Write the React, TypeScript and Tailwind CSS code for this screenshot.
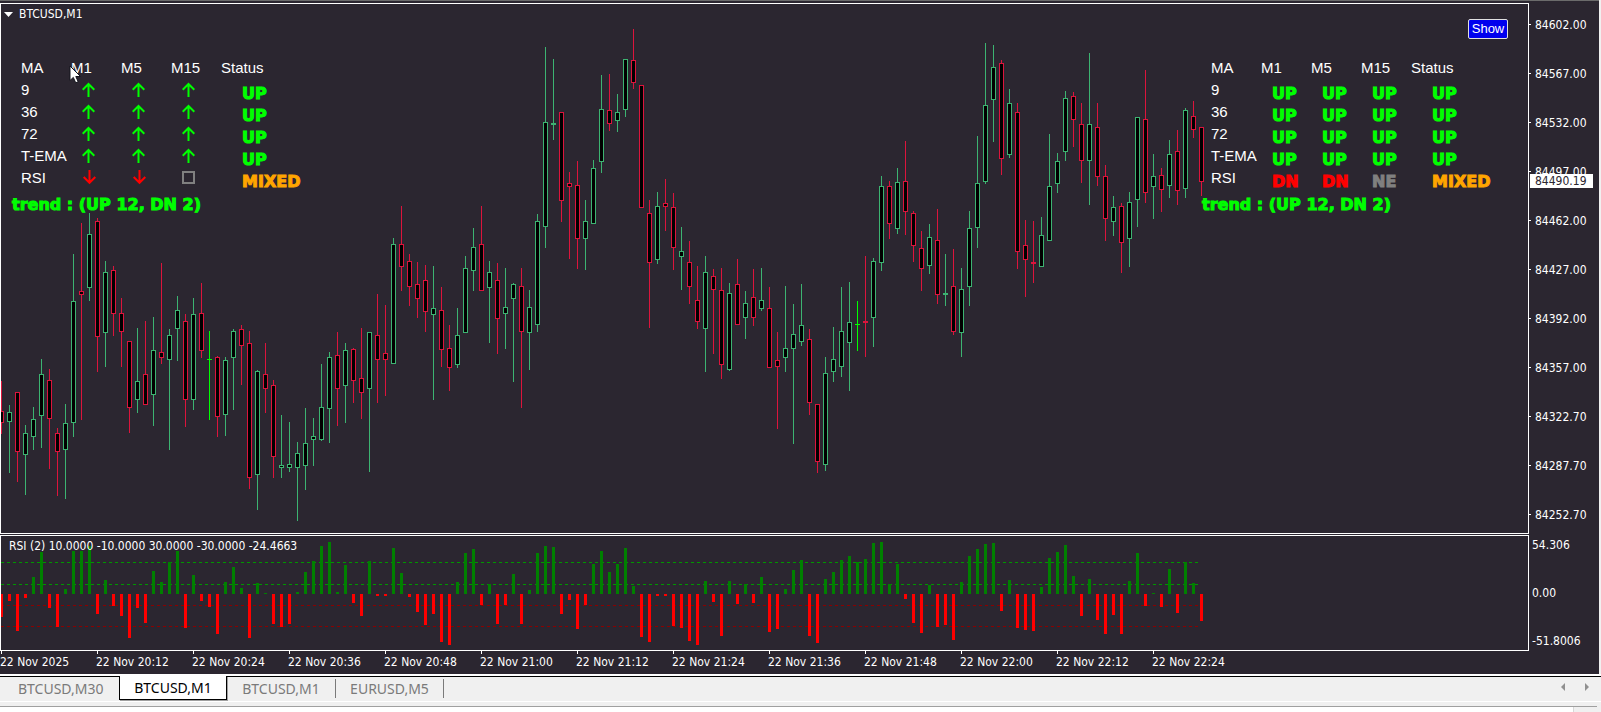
type Candle = [dir: 'u' | 'd' | 'x', high: number, top: number, bottom: number, low: number];

const STEP = 8;

const candles: Candle[] = [
  ['d', 381, 411, 423, 434], ['u', 405, 412, 422, 473], ['d', 392, 392, 452, 482], ['u', 425, 433, 455, 495],
  ['u', 407, 419, 437, 450], ['u', 359, 374, 416, 448], ['d', 369, 380, 419, 469], ['d', 428, 433, 452, 496],
  ['u', 404, 423, 450, 499], ['u', 254, 301, 423, 437], ['d', 223, 291, 295, 420], ['u', 213, 234, 288, 301],
  ['d', 218, 221, 337, 372], ['u', 261, 272, 333, 367], ['d', 266, 270, 314, 336], ['d', 298, 313, 332, 367],
  ['d', 341, 341, 408, 433], ['u', 328, 381, 400, 413], ['d', 321, 374, 405, 405], ['u', 317, 350, 395, 426],
  ['d', 263, 352, 358, 364], ['u', 329, 335, 360, 450], ['u', 296, 310, 329, 361], ['d', 314, 321, 400, 427],
  ['u', 298, 314, 400, 410], ['d', 283, 313, 351, 358], ['x', 331, 359, 360, 420], ['d', 356, 357, 417, 437],
  ['u', 357, 360, 415, 436], ['u', 329, 331, 358, 410], ['d', 325, 329, 346, 385], ['d', 331, 343, 478, 489],
  ['u', 370, 371, 475, 510], ['d', 343, 374, 389, 413], ['d', 380, 385, 457, 478], ['u', 415, 465, 468, 478],
  ['u', 422, 464, 468, 472], ['u', 442, 453, 468, 521], ['u', 408, 443, 466, 490], ['u', 418, 436, 440, 466],
  ['u', 364, 407, 440, 441], ['u', 352, 357, 409, 443], ['d', 332, 355, 389, 426], ['u', 343, 350, 386, 423],
  ['d', 348, 349, 381, 403], ['d', 328, 378, 393, 419], ['u', 332, 332, 389, 472], ['d', 294, 335, 360, 403],
  ['d', 305, 353, 360, 396], ['u', 238, 244, 364, 364], ['d', 206, 244, 267, 291], ['d', 254, 261, 287, 306],
  ['d', 262, 284, 299, 318], ['d', 265, 280, 312, 332], ['u', 266, 308, 315, 400], ['d', 287, 310, 350, 367],
  ['d', 325, 348, 368, 391], ['u', 308, 335, 365, 368], ['u', 256, 268, 333, 333], ['u', 228, 247, 271, 291],
  ['d', 206, 244, 291, 291], ['u', 261, 272, 288, 343], ['d', 263, 280, 319, 354], ['u', 268, 307, 314, 349],
  ['u', 283, 284, 299, 382], ['d', 268, 286, 332, 408], ['u', 290, 307, 333, 370], ['u', 214, 221, 325, 332],
  ['u', 47, 122, 227, 248], ['u', 59, 123, 125, 140], ['d', 112, 112, 201, 222], ['d', 172, 183, 187, 259],
  ['d', 161, 185, 239, 269], ['u', 200, 221, 239, 270], ['u', 160, 168, 224, 224], ['u', 75, 109, 162, 173],
  ['d', 74, 110, 124, 131], ['u', 94, 112, 121, 132], ['u', 59, 59, 110, 117], ['d', 29, 60, 83, 89],
  ['d', 85, 85, 208, 208], ['d', 200, 213, 263, 328], ['u', 192, 206, 260, 264], ['d', 179, 203, 207, 231],
  ['d', 193, 207, 248, 270], ['u', 227, 251, 257, 290], ['d', 241, 262, 287, 304], ['d', 266, 300, 322, 329],
  ['u', 256, 272, 329, 372], ['d', 269, 276, 290, 354], ['d', 268, 290, 365, 379], ['u', 283, 293, 370, 371],
  ['d', 259, 284, 325, 325], ['u', 291, 303, 318, 339], ['d', 269, 297, 318, 326], ['u', 268, 300, 309, 311],
  ['d', 287, 308, 368, 368], ['d', 332, 360, 367, 429], ['u', 286, 348, 358, 372], ['u', 304, 334, 349, 444],
  ['u', 284, 325, 342, 346], ['d', 329, 339, 403, 415], ['d', 404, 404, 462, 473], ['u', 357, 373, 465, 471],
  ['u', 327, 359, 372, 382], ['u', 287, 331, 367, 377], ['u', 282, 322, 343, 391], ['x', 301, 324, 325, 351],
  ['d', 256, 321, 323, 357], ['u', 258, 261, 318, 347], ['u', 176, 186, 263, 271], ['d', 181, 186, 224, 239],
  ['u', 168, 182, 229, 234], ['d', 141, 181, 212, 235], ['d', 211, 213, 246, 262], ['d', 231, 248, 269, 291],
  ['u', 224, 237, 266, 274], ['d', 209, 240, 295, 304], ['u', 254, 293, 295, 306], ['d', 249, 286, 332, 335],
  ['u', 268, 289, 333, 357], ['u', 211, 228, 287, 306], ['u', 136, 183, 228, 248], ['u', 43, 105, 182, 184],
  ['u', 45, 67, 100, 142], ['d', 60, 63, 159, 175], ['u', 89, 103, 155, 158], ['d', 103, 112, 252, 269],
  ['d', 220, 245, 260, 297], ['d', 221, 262, 264, 283], ['u', 217, 235, 267, 267], ['u', 134, 186, 241, 241],
  ['u', 153, 161, 184, 193], ['u', 91, 98, 152, 161], ['d', 92, 96, 120, 147], ['d', 103, 124, 161, 183],
  ['u', 53, 124, 161, 205], ['d', 103, 127, 177, 186], ['d', 165, 176, 219, 241], ['u', 196, 207, 222, 236],
  ['d', 203, 206, 243, 273], ['u', 192, 202, 239, 267], ['u', 117, 117, 200, 227], ['d', 70, 119, 193, 203],
  ['u', 154, 176, 187, 219], ['d', 168, 175, 190, 212], ['u', 140, 154, 186, 198], ['d', 130, 151, 191, 205],
  ['u', 108, 110, 189, 198], ['d', 101, 116, 130, 138], ['d', 127, 127, 182, 196],
];

const rsi = [
  -23, -7, -37, -4, 17, 42, -14, -33, 5, 43, 43, 48, -20, 14, -12, -22, -44, -14, -29, 23, 12, 32, 43, -34, 19,
  -7, -13, -40, 12, 27, 6, -44, 11, 1, -30, -33, -30, 2, 22, 33, 48, 52, 2, 29, -9, -22, 33, -2, -2, 46,
  21, -3, -18, -31, -20, -48, -51, 12, 41, 45, -11, 10, -30, -11, 20, -30, 4, 41, 48, 47, -20, -6, -35, -11, 30,
  43, 22, 30, 46, 8, -43, -48, -2, -2, -32, -34, -47, -51, 13, -8, -42, 13, -10, 10, -9, 17, -38, -35, 5, 24,
  34, -42, -49, 15, 22, 34, 38, 32, 35, 51, 52, 10, 30, -5, -29, -39, 9, -33, -31, -46, 12, 38, 45, 50, 51,
  -17, 14, -34, -36, -37, 7, 36, 42, 49, 18, -22, 15, -26, -40, -21, -40, 13, 41, -12, 1, -13, 25, -19, 32, 11, -27,
];

const prices = [
  '84602.00', '84567.00', '84532.00', '84497.00', '84462.00', '84427.00',
  '84392.00', '84357.00', '84322.70', '84287.70', '84252.70',
];

const times = [
  '2025', '20:12', '20:24', '20:36', '20:48', '21:00', '21:12',
  '21:24', '21:36', '21:48', '22:00', '22:12', '22:24',
];

const candleColor = { u: '#3cb371', d: '#dc143c', x: '#00ff00' };

const signalColor: Record<string, string> = {
  UP: 'text-[#00ff00]',
  DN: 'text-[#ff0000]',
  NE: 'text-[#808080]',
  MIXED: 'text-[#ffa500]',
};

const heavyText = "text-base font-bold font-['DejaVu_Sans',sans-serif] [-webkit-text-stroke:1px_currentColor]";

const rows = [
  { ma: '9', signals: ['UP', 'UP', 'UP'], status: 'UP' },
  { ma: '36', signals: ['UP', 'UP', 'UP'], status: 'UP' },
  { ma: '72', signals: ['UP', 'UP', 'UP'], status: 'UP' },
  { ma: 'T-EMA', signals: ['UP', 'UP', 'UP'], status: 'UP' },
  { ma: 'RSI', signals: ['DN', 'DN', 'NE'], status: 'MIXED' },
];

function PriceChart() {
  return (
    <svg className="absolute inset-0 w-full h-full" shapeRendering="crispEdges">
      {/* candle values are measured from the window top, the plot starts 4px below it */}
      <g transform="translate(-1 -4)">
        {candles.map(([dir, high, top, bottom, low], i) => {
          const x = 1 + i * STEP;
          const color = candleColor[dir];
          return (
            <g key={i}>
              <rect x={x} y={high} width={1} height={low - high} fill={color} />
              <rect x={x - 2} y={top} width={5} height={bottom - top} fill={color} />
              {bottom - top > 2 && (
                <rect x={x - 1} y={top + 1} width={3} height={bottom - top - 2} fill="#000" />
              )}
            </g>
          );
        })}
      </g>
    </svg>
  );
}

function RsiChart() {
  const levels = [
    { y: 26, color: '#009600' },
    { y: 48, color: '#009600' },
    { y: 69, color: '#8b0000' },
    { y: 90, color: '#8b0000' },
  ];
  return (
    <svg className="absolute inset-0 w-full h-full" shapeRendering="crispEdges">
      {levels.map(({ y, color }) => (
        <line key={y} x1={0} x2={1197} y1={y + 0.5} y2={y + 0.5} stroke={color} strokeDasharray="3 3" />
      ))}
      {rsi.map((v, i) => (
        <rect
          key={i}
          x={i * STEP - 1}
          y={v > 0 ? 58 - v : 58}
          width={3}
          height={Math.abs(v)}
          fill={v > 0 ? '#008000' : '#ff0000'}
        />
      ))}
    </svg>
  );
}

function SignalIcon({ signal }: { signal: string }) {
  return (
    <svg className="mb-0.5 block" width="14" height="15" viewBox="0 0 14 15" fill="none" stroke="currentColor" strokeWidth="2">
      {signal === 'UP' && <path d="M6.5 15V2M0.7 7.8L6.5 2L12.3 7.8" />}
      {signal === 'DN' && <path d="M7.5 0V12.5M1.7 7L7.5 12.8L13.3 7" />}
      {signal === 'NE' && <rect x="1" y="2" width="11" height="11" />}
    </svg>
  );
}

function SignalTable({ icons = false }: { icons?: boolean }) {
  return (
    <div className="w-[307px]">
      <table className="table-fixed w-full border-collapse text-left text-[15px] leading-[22px] text-white font-['Liberation_Sans',Arial,sans-serif]">
        <thead>
          <tr>
            <th className="w-[60px] p-0 pl-[10px] font-normal">MA</th>
            <th className="w-[50px] p-0 font-normal">M1</th>
            <th className="w-[50px] p-0 font-normal">M5</th>
            <th className="w-[50px] p-0 font-normal">M15</th>
            <th className="p-0 font-normal">Status</th>
          </tr>
        </thead>
        <tbody>
          {rows.map(row => (
            <tr key={row.ma} className="h-[22px]">
              <td className="p-0 pl-[10px] whitespace-nowrap">{row.ma}</td>
              {row.signals.map((signal, i) =>
                icons ? (
                  <td key={i} className={`p-0 pl-[11px] ${signalColor[signal]}`}>
                    <SignalIcon signal={signal} />
                  </td>
                ) : (
                  <td key={i} className={`p-0 pl-[11px] pt-2 ${heavyText} leading-[14px] ${signalColor[signal]}`}>
                    {signal}
                  </td>
                )
              )}
              <td className={`p-0 pl-[21px] pt-2 ${heavyText} leading-[14px] ${signalColor[row.status]}`}>
                {row.status}
              </td>
            </tr>
          ))}
        </tbody>
      </table>
      <p className={`mt-[5px] pl-px ${heavyText} leading-[22px] text-[#00ff00]`}>trend : (UP 12, DN 2)</p>
    </div>
  );
}

function App() {
  return (
    <div className="w-full bg-[#f0f0f0]">
      <div className="mr-0.5 border-t border-[#6b6b6b] bg-[#2b2630] pt-0.5 text-white text-[12px] font-['DejaVu_Sans_Condensed','DejaVu_Sans',sans-serif]">
        {/* Main chart */}
        <div className="flex">
          <div className="relative flex-1 h-[531px] border border-white overflow-hidden">
            <PriceChart />
            <div className="absolute left-[3px] top-0.5 flex items-center gap-1.5 leading-4">
              <svg width="9" height="5" viewBox="0 0 9 5" fill="#fff">
                <path d="M0 0H9L4.5 5Z" />
              </svg>
              BTCUSD,M1
            </div>
            <div className="absolute left-[10px] top-[53px]">
              <SignalTable icons />
            </div>
            <div className="absolute right-[20px] top-[53px]">
              <SignalTable />
            </div>
            <button className="absolute right-[20px] top-[15px] w-10 h-5 rounded-xs border border-[#e0e0e0] bg-[#0000ee] text-center text-[13px] leading-4 text-white font-['Liberation_Sans',Arial,sans-serif]">
              Show
            </button>
            <svg className="absolute left-[68px] top-[61px]" width="13" height="19" viewBox="0 0 13 19">
              <path d="M1 1V15.5L4.3 12.4L6.7 17.8L9.2 16.7L6.8 11.5H11.5Z" fill="#fff" stroke="#14141c" />
            </svg>
          </div>
          <div className="relative w-[70px] h-[531px] -mt-[3px]">
            {prices.map(price => (
              <div key={price} className="flex h-[49px] items-center gap-1 leading-4">
                <span className="w-0.5 h-px bg-white" />
                {price}
              </div>
            ))}
            <div className="absolute left-px top-[174px] w-[63px] h-[14px] bg-white pl-[5px] leading-[14px] text-[#2b2630]">
              84490.19
            </div>
          </div>
        </div>

        {/* RSI */}
        <div className="mt-px flex">
          <div className="relative flex-1 h-[116px] border border-white overflow-hidden">
            <RsiChart />
            <div className="absolute left-2 top-0.5 leading-4">
              RSI (2) 10.0000 -10.0000 30.0000 -30.0000 -24.4663
            </div>
          </div>
          <div className="flex w-[70px] flex-col justify-between py-0.5 pl-[3px] leading-4">
            <span>54.306</span>
            <span>0.00</span>
            <span>-51.8006</span>
          </div>
        </div>

        {/* Time axis */}
        <div className="flex h-[23px]">
          {times.map(time => (
            <div key={time} className="w-24 shrink-0 leading-4">
              <div className="ml-px w-px h-[3px] bg-white" />
              22 Nov {time}
            </div>
          ))}
        </div>
      </div>

      {/* Chart tabs */}
      <div className="h-0.5 bg-white" />
      <div className="flex h-[25px] items-start text-sm text-[#7a7a7a] font-['Noto_Sans',sans-serif]">
        <button className="w-[119px] h-6 border-t border-black text-left pl-[18px] leading-[22px]">BTCUSD,M30</button>
        <button className="w-[108px] h-6 border-x border-b border-black bg-white text-center leading-[23px] text-black shadow-[1px_1px_0_#a0a0a0]">
          BTCUSD,M1
        </button>
        <div className="flex flex-1 items-start border-t border-black">
          <button className="w-[109px] h-[19px] mt-0.5 border-r border-[#7a7a7a] leading-[18px]">BTCUSD,M1</button>
          <button className="w-[108px] h-[19px] mt-0.5 border-r border-[#7a7a7a] leading-[18px]">EURUSD,M5</button>
          <div className="ml-auto mt-1.5 mr-3 flex gap-5">
            <button aria-label="Scroll tabs left">
              <svg className="block" width="4" height="8" viewBox="0 0 4 8" fill="#909090">
                <path d="M4 0V8L0 4Z" />
              </svg>
            </button>
            <button aria-label="Scroll tabs right">
              <svg className="block" width="4" height="8" viewBox="0 0 4 8" fill="#909090">
                <path d="M0 0V8L4 4Z" />
              </svg>
            </button>
          </div>
        </div>
      </div>
      <div className="h-px bg-white" />
      <div className="h-1" />
      <div className="mr-1 flex h-1.5 border-t border-[#a0a0a0]">
        <div className="flex-1 bg-white" />
        <div className="w-6 border-l border-[#d8d8d8]" />
      </div>
    </div>
  );
}

export default App;
